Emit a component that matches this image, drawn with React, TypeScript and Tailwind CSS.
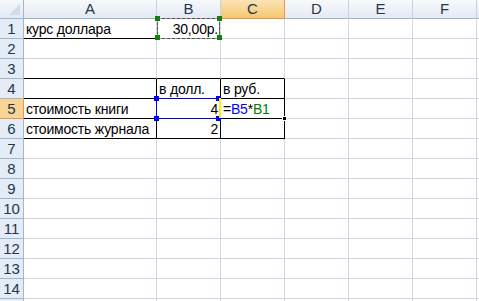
import React from 'react';

const COLS = ['A', 'B', 'C', 'D', 'E', 'F', ''];
const ROWS = Array.from({ length: 15 }, (_, i) => i + 1);
const LAST_ROW = 15; // only its top edge fits on screen

type Cell = {
  text?: React.ReactNode;
  align?: 'left' | 'right';
  right?: boolean; // black right border
  bottom?: boolean; // black bottom border
};

// sheet contents, keyed by "A1" etc.
const cells: Record<string, Cell> = {
  A1: { text: 'курс доллара', bottom: true },
  B1: { text: '30,00р.', align: 'right' },
  A3: { bottom: true },
  B3: { bottom: true },
  C3: { bottom: true },
  A4: { right: true, bottom: true },
  B4: { text: 'в долл.', right: true, bottom: true },
  C4: { text: 'в руб.', right: true, bottom: true },
  A5: { text: 'стоимость книги', right: true, bottom: true },
  B5: { text: '4', align: 'right', right: true, bottom: true },
  C5: {
    text: (
      <>
        =<span className="text-[#0000ff]">B5</span>*<span className="text-[#008000]">B1</span>
      </>
    ),
    right: true,
    bottom: true,
  },
  A6: { text: 'стоимость журнала', right: true, bottom: true },
  B6: { text: '2', align: 'right', right: true, bottom: true },
  C6: { right: true, bottom: true },
};

const Corner = () => (
  <div className="relative border-r border-b border-[#9eb6ce] bg-gradient-to-b from-[#f5f8fc] to-[#e3eaf4]">
    <svg className="absolute right-[3px] bottom-[3px]" width="11" height="11" viewBox="0 0 11 11">
      <polygon points="11,0 11,11 0,11" fill="#d3dbe6" />
    </svg>
  </div>
);

const ColHeader = ({ label }: { label: string }) => {
  const active = label === 'C';
  return (
    <div
      className={
        active
          ? 'flex items-center justify-center text-[15px] border-r border-b border-[#f29536] bg-gradient-to-b from-[#fbe3b5] to-[#f4c76f] text-[#27364a]'
          : 'flex items-center justify-center text-[15px] border-r border-b border-r-[#c5d3e2] border-b-[#9eb6ce] bg-gradient-to-b from-[#f7f9fc] to-[#e4eaf3] text-[#27364a]'
      }
    >
      {label}
    </div>
  );
};

const RowHeader = ({ n }: { n: number }) => {
  const active = n === 5;
  return (
    <div
      className={
        active
          ? 'flex items-center justify-center pt-[1px] text-[15px] border-r border-b border-[#f29536] bg-[#f8d594] text-[#27364a]'
          : 'flex items-center justify-center pt-[1px] text-[15px] border-r border-b border-r-[#9eb6ce] border-b-[#9eb6ce] bg-[#e4ecf7] text-[#27364a]'
      }
    >
      {n < LAST_ROW ? n : null}
    </div>
  );
};

const SheetCell = ({ id }: { id: string }) => {
  const c = cells[id] ?? {};
  return (
    <div
      className={[
        'flex items-end overflow-visible whitespace-nowrap px-[2px] border-r border-b text-black tracking-[-0.2px]',
        c.right ? 'border-r-black' : 'border-r-[#d0d7e5]',
        c.bottom ? 'border-b-black' : 'border-b-[#d0d7e5]',
        c.align === 'right' ? 'justify-end' : 'justify-start',
      ].join(' ')}
    >
      {c.text}
    </div>
  );
};

const Handle = ({ className }: { className: string }) => (
  <div className={'absolute h-[5px] w-[5px] ' + className} />
);

export default function App() {
  return (
    <div className="h-[301px] w-[479px] overflow-hidden bg-white">
      <div
        className="relative grid grid-cols-[24px_133px_64px_64px_64px_64px_64px_64px] grid-rows-[19px_repeat(15,20px)] text-[14px] leading-[18px]"
        style={{ fontFamily: '"Liberation Sans", Arial, sans-serif' }}
      >
        <Corner />
        {COLS.map((c, i) => (
          <ColHeader key={i} label={c} />
        ))}
        {ROWS.map((r) => (
          <React.Fragment key={r}>
            <RowHeader n={r} />
            {COLS.map((c, i) => (
              <SheetCell key={i} id={c + r} />
            ))}
          </React.Fragment>
        ))}

        {/* B1 reference marquee */}
        <div className="absolute left-[157px] top-[18px] h-[21px] w-[63px] border border-[#ff55ff]" />
        <div className="absolute left-[157px] top-[18px] h-[21px] w-[63px] border border-dashed border-[#108010]" />
        <Handle className="left-[155px] top-[16px] bg-[#108010]" />
        <Handle className="left-[217px] top-[16px] bg-[#108010]" />
        <Handle className="left-[155px] top-[35px] bg-[#108010]" />
        <Handle className="left-[217px] top-[35px] bg-[#108010]" />

        {/* B5 reference box */}
        <div className="absolute left-[156px] top-[98px] h-[21px] w-[64px] border border-[#0000ff]" />
        <Handle className="left-[154px] top-[96px] bg-[#0000ff]" />
        <Handle className="left-[154px] top-[116px] bg-[#0000ff]" />
        <Handle className="left-[216px] top-[96px] bg-[#0000ff]" />
        <Handle className="left-[216px] top-[116px] bg-[#0000ff]" />
        <div className="absolute left-[219px] top-[98px] h-[20px] w-[2px] bg-[#ffee00]" />

        {/* fill handle of the active cell */}
        <div className="absolute left-[282px] top-[116px] h-[5px] w-[5px] border border-white bg-black" />
      </div>
    </div>
  );
}
